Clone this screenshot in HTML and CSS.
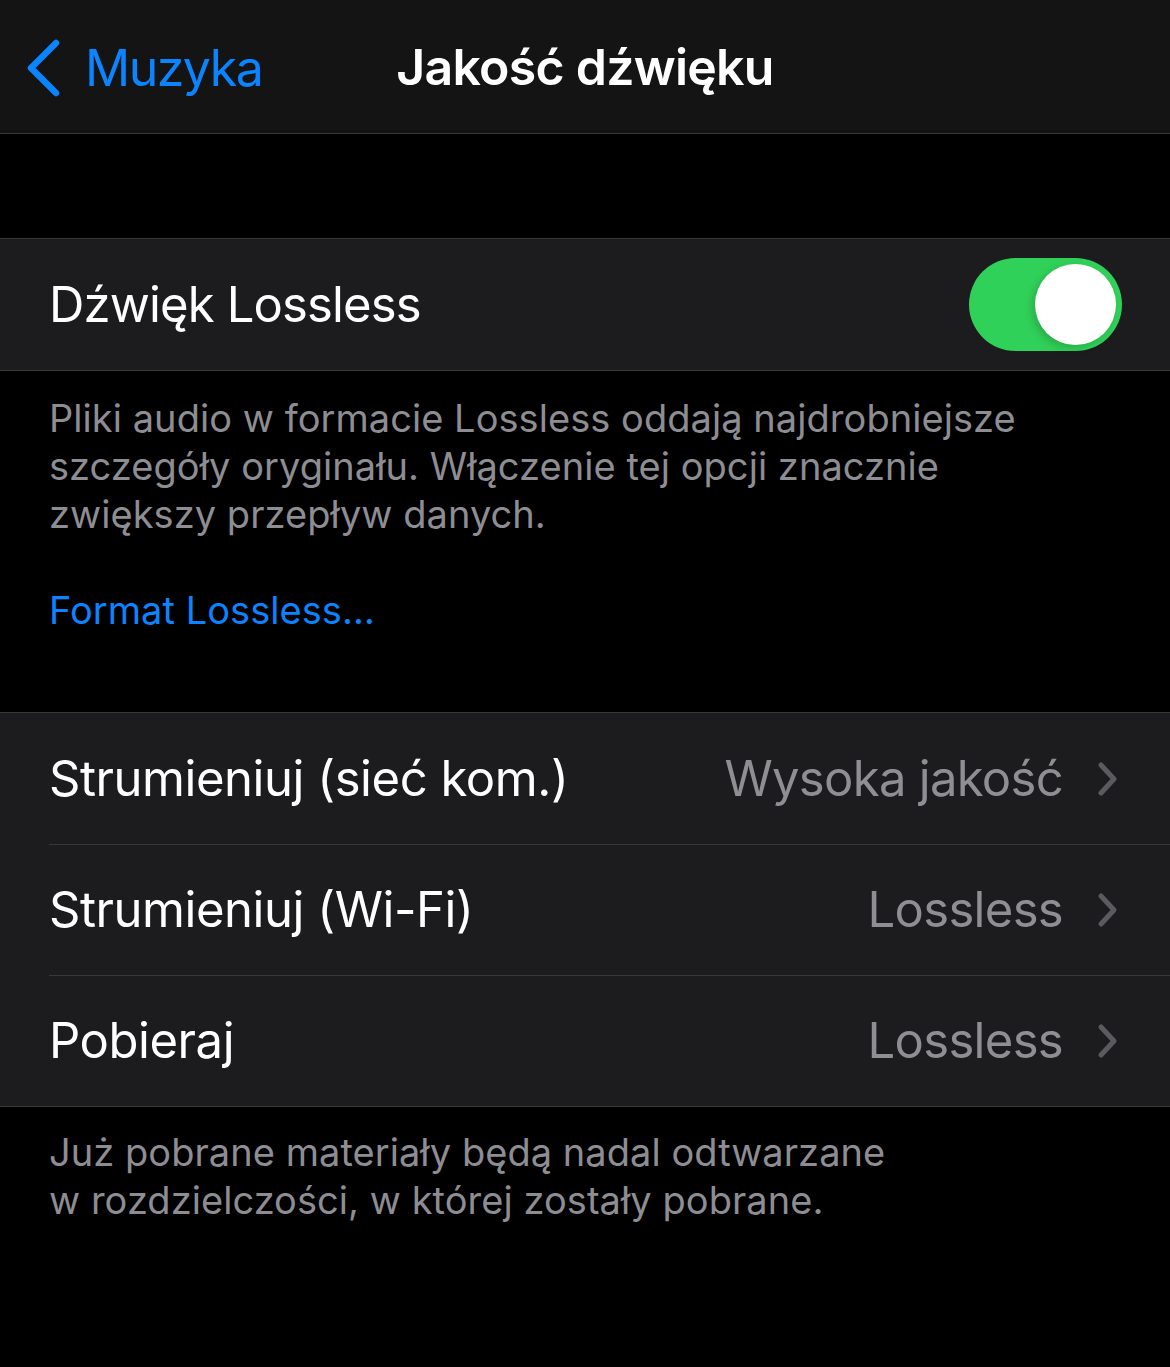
FILE: index.html
```html
<!DOCTYPE html>
<html lang="pl">
<head>
<meta charset="utf-8">
<link rel="stylesheet" href="styles.css">
</head>
<body>
<div class="screen">
  <header class="nav">
    <div class="back">
      <svg class="back-chev" width="36" height="58" viewBox="0 0 36 58"><path d="M31 4 L6 29 L31 54" fill="none" stroke="#0a84ff" stroke-width="6.5" stroke-linecap="round" stroke-linejoin="round"/></svg>
      <span class="back-label">Muzyka</span>
    </div>
    <div class="nav-title">Jakość dźwięku</div>
  </header>

  <div class="spacer"></div>

  <section class="group">
    <div class="row row-toggle">
      <span class="label">Dźwięk Lossless</span>
      <div class="switch"><div class="knob"></div></div>
    </div>
  </section>

  <div class="footer footer-1">
    <p class="note">Pliki audio w formacie Lossless oddają najdrobniejsze szczegóły oryginału. Włączenie tej opcji znacznie zwiększy przepływ danych.</p>
    <p class="link">Format Lossless…</p>
  </div>

  <section class="group">
    <div class="row">
      <span class="label">Strumieniuj (sieć kom.)</span>
      <span class="value">Wysoka jakość</span>
      <svg class="chev" width="22" height="36" viewBox="0 0 22 36"><path d="M4 4 L17 18 L4 32" fill="none" stroke="#5b5b5f" stroke-width="5" stroke-linecap="round" stroke-linejoin="round"/></svg>
    </div>
    <div class="row">
      <span class="label">Strumieniuj (Wi-Fi)</span>
      <span class="value">Lossless</span>
      <svg class="chev" width="22" height="36" viewBox="0 0 22 36"><path d="M4 4 L17 18 L4 32" fill="none" stroke="#5b5b5f" stroke-width="5" stroke-linecap="round" stroke-linejoin="round"/></svg>
    </div>
    <div class="row">
      <span class="label">Pobieraj</span>
      <span class="value">Lossless</span>
      <svg class="chev" width="22" height="36" viewBox="0 0 22 36"><path d="M4 4 L17 18 L4 32" fill="none" stroke="#5b5b5f" stroke-width="5" stroke-linecap="round" stroke-linejoin="round"/></svg>
    </div>
  </section>

  <div class="footer footer-2">
    <p class="note">Już pobrane materiały będą nadal odtwarzane<br>w rozdzielczości, w której zostały pobrane.</p>
  </div>
</div>
</body>
</html>
```

FILE: styles.css
```css
* { box-sizing: border-box; }
html, body {
  margin: 0;
  padding: 0;
  background: #000;
}
body {
  font-family: Inter, "Noto Sans", "DejaVu Sans", sans-serif;
  color: #fff;
  width: 1170px;
  height: 1367px;
  overflow: hidden;
}
.screen {
  width: 1170px;
  min-height: 1367px;
  background: #000;
}
.nav {
  height: 134px;
  background: #141414;
  border-bottom: 1px solid #38383a;
  position: relative;
  display: flex;
  align-items: center;
  justify-content: center;
}
.back {
  position: absolute;
  left: 25px;
  top: 38px;
  display: flex;
  align-items: center;
  gap: 24px;
  color: #0a84ff;
}
.back-chev { display: block; }
.back-label {
  font-size: 50px;
  letter-spacing: -1.5px;
}
.nav-title {
  font-size: 50px;
  font-weight: 600;
  letter-spacing: -0.75px;
}
.spacer { height: 104px; }
.group {
  background: #1c1c1e;
  border-top: 1px solid #38383a;
  border-bottom: 1px solid #38383a;
}
.row {
  height: 131px;
  display: flex;
  align-items: center;
  padding: 0 49px 0 49px;
  position: relative;
}
.row + .row::before {
  content: "";
  position: absolute;
  left: 49px;
  right: 0;
  top: 0;
  height: 1px;
  background: #38383a;
}
.label {
  flex: 1;
  font-size: 49px;
  letter-spacing: -0.45px;
}
.value {
  font-size: 49px;
  color: #8e8e93;
  letter-spacing: -0.7px;
  margin-right: 34px;
}
.chev { display: block; margin-right: 2px; }
.row-toggle { padding-right: 48px; }
.row-toggle .label { letter-spacing: -0.85px; }
.switch {
  width: 153px;
  height: 93px;
  border-radius: 47px;
  background: #30d158;
  position: relative;
}
.knob {
  position: absolute;
  right: 6px;
  top: 6px;
  width: 81px;
  height: 81px;
  border-radius: 50%;
  background: #fff;
  box-shadow: -3px 3px 8px rgba(0,0,0,0.18);
}
.footer {
  padding: 0 49px;
}
.footer-1 { padding-top: 23px; padding-right: 140px; height: 341px; }
.footer-2 { padding-top: 21px; }
.note {
  margin: 0;
  font-size: 38px;
  line-height: 48px;
  color: #8d8d93;
  letter-spacing: 0.05px;
}
.link {
  margin: 48px 0 0;
  font-size: 38px;
  line-height: 48px;
  color: #0a84ff;
  letter-spacing: 0.05px;
}
```
